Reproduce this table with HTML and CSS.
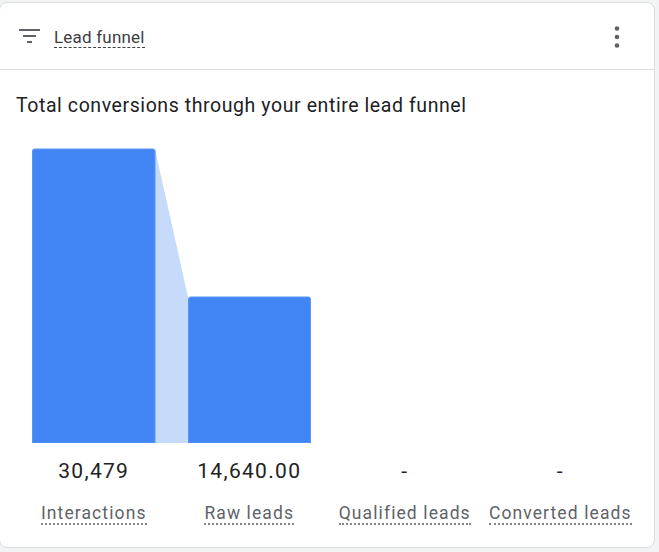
FILE: index.html
```html
<!DOCTYPE html>
<html>
<head>
<meta charset="utf-8">
<link rel="stylesheet" href="styles.css">
</head>
<body>
<div class="card">
  <div class="header">
    <svg class="filter-icon" width="22" height="16" viewBox="0 0 22 16">
      <rect x="0" y="0" width="21" height="2" fill="#5f6368"/>
      <rect x="4" y="6" width="13" height="2" fill="#5f6368"/>
      <rect x="8" y="12" width="5" height="2" fill="#5f6368"/>
    </svg>
    <span class="title">Lead funnel</span>
    <svg class="kebab" width="6" height="22" viewBox="0 0 6 22">
      <circle cx="3" cy="2.5" r="2.3" fill="#5f6368"/>
      <circle cx="3" cy="11" r="2.3" fill="#5f6368"/>
      <circle cx="3" cy="19.5" r="2.3" fill="#5f6368"/>
    </svg>
  </div>
  <div class="body">
    <div class="subtitle">Total conversions through your entire lead funnel</div>
    <div class="chart">
      <svg class="bars" width="624" height="295" viewBox="0 0 624 295">
        <polygon points="139,1 172,149 172,295 139,295" fill="#c6dafc"/>
        <path d="M16.5,295 V3 Q16.5,1 18.5,1 H137 Q139,1 139,3 V295 Z" fill="#4285f4" stroke="#5b96f6" stroke-width="1"/>
        <path d="M172.5,295 V151 Q172.5,149 174.5,149 H292.5 Q294.5,149 294.5,151 V295 Z" fill="#4285f4" stroke="#5b96f6" stroke-width="1"/>
      </svg>
      <div class="cols">
        <div class="col"><div class="value">30,479</div><div class="label"><span>Interactions</span></div></div>
        <div class="col"><div class="value">14,640.00</div><div class="label"><span>Raw leads</span></div></div>
        <div class="col"><div class="value">-</div><div class="label"><span>Qualified leads</span></div></div>
        <div class="col"><div class="value">-</div><div class="label"><span>Converted leads</span></div></div>
      </div>
    </div>
  </div>
</div>
</body>
</html>
```

FILE: styles.css
```css
html, body {
  margin: 0;
  padding: 0;
  background: #f1f3f4;
  font-family: Roboto, "Liberation Sans", sans-serif;
}
body {
  padding-top: 2px;
  height: 550px;
  overflow: hidden;
}
.card {
  margin: 0 4px 0 -1px;
  height: 546px;
  box-sizing: border-box;
  background: #fff;
  border: 1px solid #dadce0;
  border-radius: 8px;
}
.header {
  height: 66px;
  border-bottom: 1px solid #dadce0;
  display: flex;
  align-items: center;
  padding: 0 34px 0 19px;
}
.filter-icon {
  margin-top: 1px;
}
.title {
  margin-left: 13px;
  font-size: 17px;
  letter-spacing: 0.2px;
  color: #3c4043;
  border-bottom: 1px dashed #3c4043;
  line-height: 20px;
  padding-top: 2px;
}
.kebab {
  margin-left: auto;
  margin-top: 1px;
}
.body {
  padding: 25px 16px 0 16px;
}
.subtitle {
  font-size: 19.5px;
  letter-spacing: 0.58px;
  color: #202124;
  line-height: 22px;
}
.chart {
  margin-top: 31px;
}
.bars {
  display: block;
}
.cols {
  display: grid;
  grid-template-columns: repeat(4, 1fr);
}
.col {
  text-align: center;
}
.value {
  font-size: 21px;
  letter-spacing: 1.3px;
  color: #202124;
  line-height: 26px;
  margin-top: 15px;
}
.label {
  margin-top: 18px;
  font-size: 17.5px;
  letter-spacing: 1.1px;
  color: #5f6368;
  line-height: 22px;
}
.label span {
  border-bottom: 2px dotted #80868b;
}
```
